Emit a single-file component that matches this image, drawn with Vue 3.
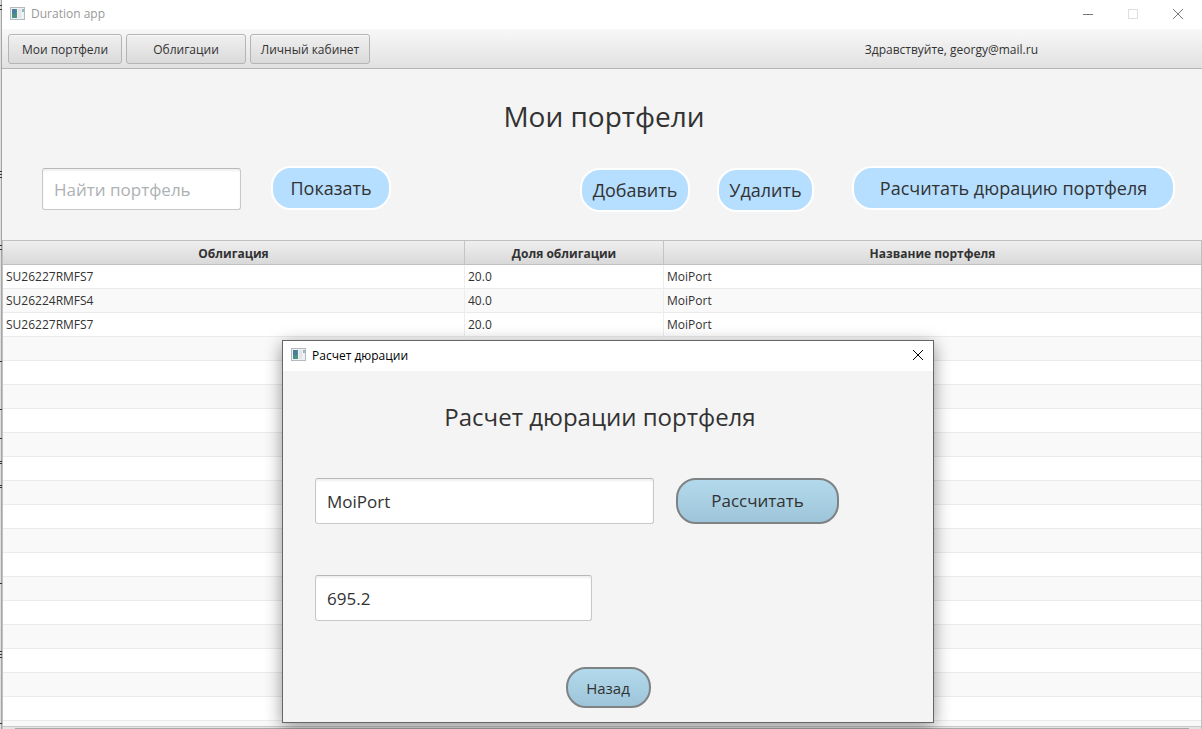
<script setup>
import { ref } from 'vue'

const menu = [
  { label: 'Мои портфели', cls: 'nav-first' },
  { label: 'Облигации', cls: '' },
  { label: 'Личный кабинет', cls: '' },
]
const holdings = [
  { bond: 'SU26227RMFS7', share: '20.0', portfolio: 'MoiPort' },
  { bond: 'SU26224RMFS4', share: '40.0', portfolio: 'MoiPort' },
  { bond: 'SU26227RMFS7', share: '20.0', portfolio: 'MoiPort' },
]
const emptyRows = 17
const edgeMarks = [5, 9, 171, 174, 177, 245, 249, 361, 409, 438, 461, 463, 485, 487, 583, 651, 654, 657, 723]
const search = ref('')
const portfolio = ref('MoiPort')
const duration = ref('695.2')
</script>

<template>
  <div class="window">
    <svg class="edge" width="2" height="729" viewBox="0 0 2 729" aria-hidden="true">
      <rect v-for="y in edgeMarks" :key="y" x="0" :y="y" width="2" height="1" fill="#333" />
    </svg>
    <header class="titlebar">
      <svg class="app-icon" width="16" height="14" viewBox="0 0 16 14" aria-hidden="true">
        <rect x="0.5" y="0.5" width="14" height="12" fill="#eef1f3" stroke="#b3bac0" />
        <rect x="2" y="2" width="5" height="9" fill="#4b9285" />
        <rect x="2" y="2" width="4" height="5" fill="#4a7c9c" />
        <rect x="8" y="2" width="3" height="9" fill="#e2e4e6" />
        <rect x="12" y="2" width="2" height="3" fill="#8fb8c4" />
      </svg>
      <span class="app-name">Duration app</span>
      <div class="controls">
        <button type="button" aria-label="Свернуть">
          <svg width="12" height="12" viewBox="0 0 12 12"><path d="M1 6.5h10" stroke="#777" /></svg>
        </button>
        <button type="button" aria-label="Развернуть" disabled>
          <svg width="12" height="12" viewBox="0 0 12 12"><rect x="1.5" y="1.5" width="9" height="9" fill="none" stroke="#dedede" /></svg>
        </button>
        <button type="button" aria-label="Закрыть">
          <svg width="12" height="12" viewBox="0 0 12 12"><path d="M1 1l10 10M11 1L1 11" stroke="#777" /></svg>
        </button>
      </div>
    </header>

    <nav class="toolbar">
      <button v-for="m in menu" :key="m.label" type="button" class="nav-btn" :class="m.cls">{{ m.label }}</button>
      <span class="greeting">Здравствуйте, georgy@mail.ru</span>
    </nav>

    <main class="content">
      <h1>Мои портфели</h1>
      <div class="actions">
        <input v-model="search" class="field search" type="text" placeholder="Найти портфель" aria-label="Найти портфель" />
        <button type="button" class="pill show">Показать</button>
        <div class="edit">
          <button type="button" class="pill add">Добавить</button>
          <button type="button" class="pill remove">Удалить</button>
        </div>
        <button type="button" class="pill calc">Расчитать дюрацию портфеля</button>
      </div>

      <div class="table-wrap">
        <table>
          <colgroup>
            <col class="c-bond" />
            <col class="c-share" />
            <col />
          </colgroup>
          <thead>
            <tr>
              <th scope="col">Облигация</th>
              <th scope="col">Доля облигации</th>
              <th scope="col">Название портфеля</th>
            </tr>
          </thead>
          <tbody>
            <tr v-for="(h, i) in holdings" :key="i">
              <td>{{ h.bond }}</td>
              <td>{{ h.share }}</td>
              <td>{{ h.portfolio }}</td>
            </tr>
            <tr v-for="n in emptyRows" :key="'e' + n" class="empty">
              <td colspan="3"></td>
            </tr>
          </tbody>
        </table>
        <div class="scrollbar"><div class="thumb"></div></div>
      </div>
    </main>

    <section class="dialog" role="dialog" aria-labelledby="dialog-title">
      <header class="dialog-bar">
        <svg class="app-icon" width="16" height="14" viewBox="0 0 16 14" aria-hidden="true">
          <rect x="0.5" y="0.5" width="14" height="12" fill="#eef1f3" stroke="#b3bac0" />
          <rect x="2" y="2" width="5" height="9" fill="#4b9285" />
          <rect x="2" y="2" width="4" height="5" fill="#4a7c9c" />
          <rect x="8" y="2" width="3" height="9" fill="#e2e4e6" />
          <rect x="12" y="2" width="2" height="3" fill="#8fb8c4" />
        </svg>
        <span id="dialog-title" class="dialog-name">Расчет дюрации</span>
        <button type="button" class="dialog-close" aria-label="Закрыть окно">
          <svg width="12" height="12" viewBox="0 0 12 12"><path d="M1 1l10 10M11 1L1 11" stroke="#000" /></svg>
        </button>
      </header>
      <div class="dialog-body">
        <h2>Расчет дюрации портфеля</h2>
        <div class="form-row">
          <input v-model="portfolio" class="field name" type="text" aria-label="Портфель" />
          <button type="button" class="blue compute">Рассчитать</button>
        </div>
        <input v-model="duration" class="field result" type="text" aria-label="Дюрация" />
        <button type="button" class="blue back">Назад</button>
      </div>
    </section>
  </div>
</template>

<style>
html,
body {
  background: #f4f4f4;
}
</style>

<style scoped>
* {
  box-sizing: border-box;
}
.window {
  position: relative;
  display: flex;
  flex-direction: column;
  height: 100vh;
  overflow: hidden;
  padding-left: 2px;
  background: #f4f4f4;
  color: #323232;
  font: 12px/16px 'Open Sans', 'Noto Sans', sans-serif;
}
.edge {
  position: absolute;
  top: 0;
  left: 0;
  height: 100%;
  background: linear-gradient(90deg, #dedede 50%, #a6a6a6 50%);
}
button,
input {
  margin: 0;
  padding: 0;
  color: inherit;
  font: inherit;
}
.titlebar {
  display: flex;
  align-items: center;
  flex: none;
  height: 29px;
  padding: 0 2px 2px 8px;
  background: #fff;
}
.app-icon {
  flex: none;
}
.app-name {
  margin-left: 5px;
  color: #999;
}
.controls {
  display: flex;
  margin-left: auto;
}
.controls button {
  display: grid;
  place-items: center;
  width: 45px;
  height: 26px;
  border: 0;
  background: none;
}
.toolbar {
  display: flex;
  align-items: center;
  flex: none;
  gap: 4px;
  height: 40px;
  padding: 0 164px 0 6px;
  border-bottom: 1px solid #b5b5b5;
  background: linear-gradient(#f8f8f8, #e1e1e1);
}
.nav-btn {
  width: 120px;
  height: 30px;
  padding-top: 2px;
  border: 1px solid #b4b4b4;
  border-radius: 3px;
  background: linear-gradient(#f0f0f0, #dadada);
  box-shadow: inset 0 1px #fafafa;
}
.nav-first {
  width: 114px;
}
.greeting {
  margin-left: auto;
  padding-top: 2px;
}
.content {
  display: flex;
  flex: 1;
  flex-direction: column;
  min-height: 0;
}
h1 {
  margin: 27px 0 30px 4px;
  font-size: 28px;
  font-weight: 400;
  line-height: 40px;
  text-align: center;
}
.actions {
  display: flex;
  align-items: flex-start;
  flex: none;
  height: 46px;
  padding: 0 27px 0 40px;
}
.field {
  display: block;
  border: 1px solid #c8c8c8;
  border-top-color: #b8b8b8;
  border-radius: 3px;
  background: #fff;
  box-shadow: inset 0 2px 2px #f0f0f0;
  padding: 0 11px;
  font-size: 17px;
}
.field::placeholder {
  color: #aeb1b3;
  opacity: 1;
}
.search {
  align-self: center;
  width: 199px;
  height: 42px;
}
.pill {
  height: 44px;
  border: 2px solid #fff;
  border-radius: 20px;
  background: #b5deff;
  font-size: 18px;
  white-space: nowrap;
}
.show {
  width: 120px;
  margin-left: 30px;
}
.edit {
  display: flex;
  align-self: flex-end;
  gap: 27px;
  margin-left: auto;
}
.add {
  width: 110px;
}
.remove {
  width: 97px;
}
.calc {
  width: 323px;
  margin-left: 38px;
}
.table-wrap {
  position: relative;
  flex: 1;
  min-height: 0;
  margin-top: 28px;
  overflow: hidden;
  border: 1px solid #c0c0c0;
  border-bottom: 0;
}
table {
  width: 100%;
  border-collapse: separate;
  border-spacing: 0;
  table-layout: fixed;
}
.c-bond {
  width: 462px;
}
.c-share {
  width: 199px;
}
th {
  height: 24px;
  padding: 2px 0 0;
  border-right: 1px solid #c4c4c4;
  border-bottom: 1px solid #c0c0c0;
  background: linear-gradient(#efefef, #d9d9d9);
  font-weight: 700;
}
th:last-child,
td:last-child {
  border-right: 0;
}
td {
  height: 24px;
  padding: 0 3px;
  border-right: 1px solid #ededed;
  border-bottom: 1px solid #ebebeb;
  background: #fff;
}
tbody tr:nth-child(even) td {
  background: #f9f9f9;
}
.scrollbar {
  position: absolute;
  right: 0;
  bottom: 0;
  left: 0;
  height: 3px;
  padding: 1px 12px 0;
  border-top: 1px solid #c8c8c8;
  background: #e4e4e4;
}
.thumb {
  height: 1px;
  background: #a8a8a8;
}
.dialog {
  position: absolute;
  top: 340px;
  left: 282px;
  width: 652px;
  border: 1px solid #666;
  background: #f4f4f4;
  box-shadow: 0 4px 16px rgba(0, 0, 0, 0.42);
}
.dialog-bar {
  display: flex;
  align-items: center;
  height: 30px;
  padding: 0 9px 2px 8px;
  background: #fff;
  color: #000;
}
.dialog-name {
  margin-left: 5px;
  padding-top: 2px;
}
.dialog-close {
  display: grid;
  place-items: center;
  margin-left: auto;
  border: 0;
  background: none;
}
.dialog-body {
  padding: 28px 32px 14px;
}
h2 {
  margin: 0 16px 43px 0;
  font-size: 24px;
  font-weight: 400;
  line-height: 36px;
  text-align: center;
}
.form-row {
  display: flex;
  gap: 22px;
}
.name,
.result {
  height: 46px;
}
.name {
  width: 339px;
}
.result {
  width: 277px;
  margin-top: 51px;
}
.blue {
  border: 2px solid #7f8284;
  border-radius: 20px;
  background: linear-gradient(#b3daec, #9dc4d8);
}
.compute {
  width: 163px;
  height: 46px;
  font-size: 17px;
}
.back {
  display: block;
  width: 85px;
  height: 41px;
  margin: 46px auto 0;
  font-size: 15px;
}
</style>
